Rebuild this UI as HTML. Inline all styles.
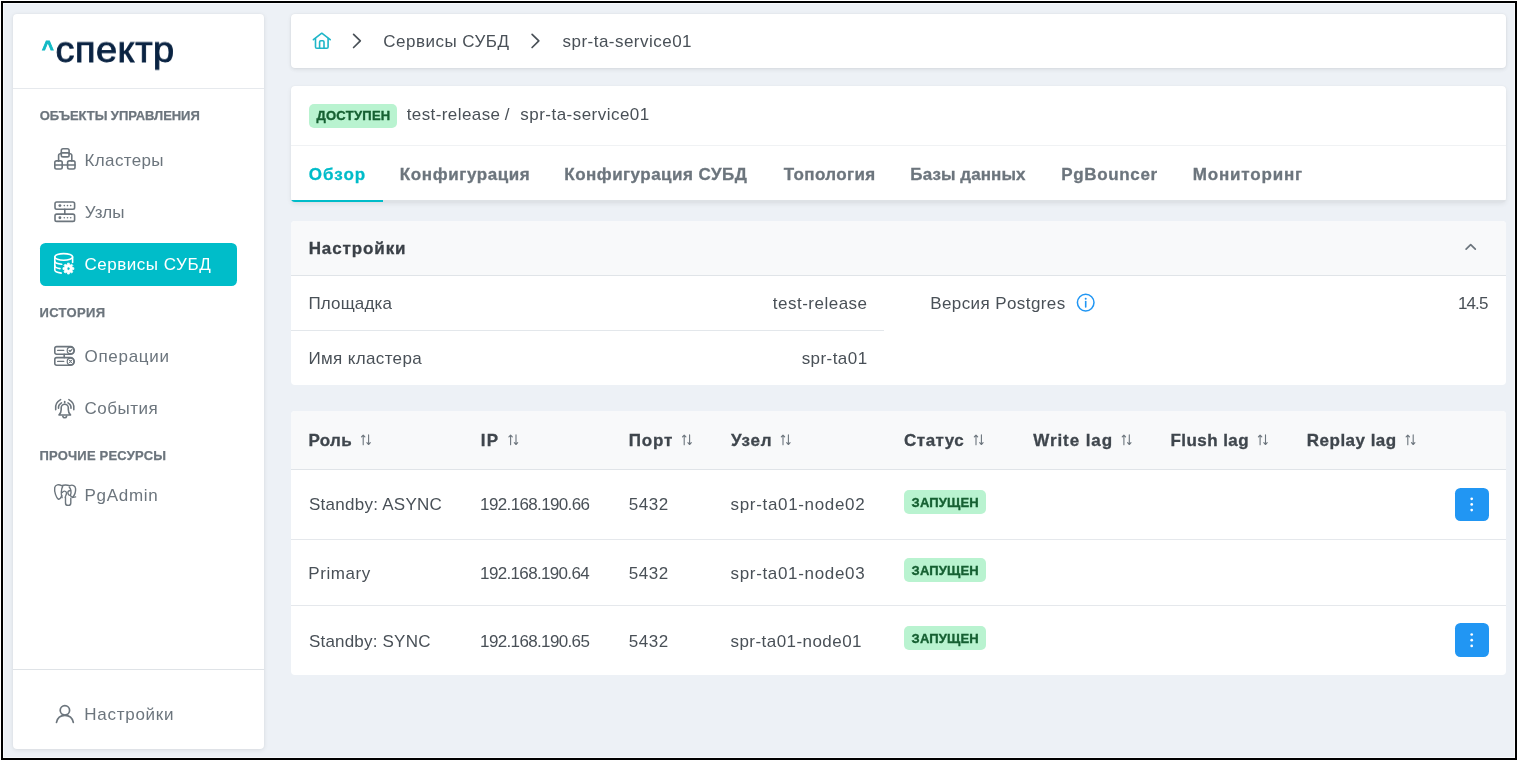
<!DOCTYPE html>
<html lang="ru"><head><meta charset="utf-8"><title>Спектр</title>
<style>
html,body{margin:0;padding:0;background:#fff;}
body{width:1518px;height:761px;position:relative;overflow:hidden;font-family:"Liberation Sans",Arial,sans-serif;}
#frame{position:absolute;left:1px;top:1px;width:1512px;height:755px;border:2px solid #000;background:#edf1f6;}
#frame:after{content:"";position:absolute;left:0;top:0;right:0;bottom:0;border:1px solid #f7f9fc;}
.t{position:absolute;white-space:nowrap;line-height:24px;height:24px;will-change:transform;}
.card{position:absolute;background:#fff;border-radius:4px;box-shadow:0 3px 5px rgba(0,0,0,.02),0 0 2px rgba(0,0,0,.05),0 1px 4px rgba(0,0,0,.08);}
.ln{position:absolute;height:1px;background:#e5e8ec;}
.ab{position:absolute;}
svg{position:absolute;overflow:visible;}
</style></head><body>
<div id="frame"></div>

<nav aria-label="Меню">
<div class="card" style="left:13px;top:14px;width:251px;height:735.2px;box-shadow:0 1px 5px rgba(0,0,0,.09),0 0 2px rgba(0,0,0,.04);"></div>
<div class="ln" style="left:13px;top:88px;width:251px;background:#e6e9ed;"></div>
<div class="ln" style="left:13px;top:668.7px;width:251px;background:#dfe3e7;"></div>
<span class="t" style="left:41px;padding-left:0.95px;top:36px;font-size:20px;font-weight:700;color:#12b9c4;letter-spacing:0.000px;-webkit-text-stroke:0.9px #12b9c4;">^</span>
<span class="t" style="left:55px;padding-left:0.38px;top:37px;font-size:38px;color:#0a2342;letter-spacing:0.511px;-webkit-text-stroke:0.9px #0a2342;transform:scaleY(0.93);transform-origin:0 25px;">спектр</span>
<span class="t" style="left:39px;padding-left:0.78px;top:104px;font-size:13px;font-weight:700;color:#6c757d;letter-spacing:-0.046px;-webkit-text-stroke:0.25px;">ОБЪЕКТЫ УПРАВЛЕНИЯ</span>
<span class="t" style="left:84px;padding-left:0.60px;top:149px;font-size:17px;color:#6c757d;letter-spacing:0.350px;">Кластеры</span>
<span class="t" style="left:84px;padding-left:0.83px;top:201px;font-size:17px;color:#6c757d;letter-spacing:0.049px;">Узлы</span>
<div class="ab" style="left:39.8px;top:242.5px;width:197.4px;height:43.2px;border-radius:5.5px;background:#00bdc9;"></div>
<span class="t" style="left:84px;padding-left:0.45px;top:253px;font-size:17px;color:#fff;letter-spacing:0.535px;">Сервисы СУБД</span>
<span class="t" style="left:39px;padding-left:0.46px;top:301px;font-size:13px;font-weight:700;color:#6c757d;letter-spacing:0.353px;-webkit-text-stroke:0.25px;">ИСТОРИЯ</span>
<span class="t" style="left:84px;padding-left:0.49px;top:345px;font-size:17px;color:#6c757d;letter-spacing:0.705px;">Операции</span>
<span class="t" style="left:84px;padding-left:0.45px;top:397px;font-size:17px;color:#6c757d;letter-spacing:0.505px;">События</span>
<span class="t" style="left:39px;padding-left:0.42px;top:444px;font-size:13px;font-weight:700;color:#6c757d;letter-spacing:0.210px;-webkit-text-stroke:0.25px;">ПРОЧИЕ РЕСУРСЫ</span>
<span class="t" style="left:84px;padding-left:0.50px;top:484px;font-size:17px;color:#6c757d;letter-spacing:0.715px;">PgAdmin</span>
<span class="t" style="left:84px;padding-left:0.30px;top:703px;font-size:17px;color:#6c757d;letter-spacing:0.726px;">Настройки</span>
</nav>
<main>
<section aria-label="breadcrumb">
<div class="card" style="left:291.3px;top:14px;width:1215px;height:53.5px;"></div>
<span class="t" style="left:383px;padding-left:0.25px;top:30px;font-size:17px;color:#495057;letter-spacing:0.490px;">Сервисы СУБД</span>
<span class="t" style="left:562px;padding-left:0.53px;top:30px;font-size:17px;color:#495057;letter-spacing:0.475px;">spr-ta-service01</span>
</section>
<section aria-label="service">
<div class="card" style="left:291.3px;top:86.2px;width:1215px;height:116.3px;background:#dee2e6;box-shadow:0 2px 5px rgba(0,0,0,.07),0 0 2px rgba(0,0,0,.04);overflow:hidden;"><div style="height:113.5px;background:#fff;"></div><div style="height:2.8px;width:91.7px;background:#00bcc9;"></div></div>
<div class="ln" style="left:291.3px;top:144.5px;width:1215px;background:#f0f2f4;"></div>
<div class="ab" style="left:309.4px;top:104px;width:87.6px;height:24px;border-radius:5px;background:#b9f3d0;"></div>
<span class="t" style="left:316px;padding-left:0.40px;top:104px;font-size:13px;font-weight:700;color:#166032;letter-spacing:0.284px;-webkit-text-stroke:0.35px;">ДОСТУПЕН</span>
<span class="t" style="left:406px;padding-left:0.64px;top:103px;font-size:17px;color:#495057;letter-spacing:0.418px;">test-release</span>
<span class="t" style="left:504px;padding-left:0.80px;top:103px;font-size:17px;color:#495057;letter-spacing:0.000px;">/</span>
<span class="t" style="left:520px;padding-left:0.33px;top:103px;font-size:17px;color:#495057;letter-spacing:0.469px;">spr-ta-service01</span>
<span class="t" style="left:308px;padding-left:0.82px;top:163px;font-size:17px;font-weight:700;color:#00bcc9;letter-spacing:1.021px;-webkit-text-stroke:0.3px;">Обзор</span>
<span class="t" style="left:399px;padding-left:0.85px;top:163px;font-size:17px;font-weight:700;color:#6c757d;letter-spacing:0.600px;-webkit-text-stroke:0.3px;">Конфигурация</span>
<span class="t" style="left:564px;padding-left:0.35px;top:163px;font-size:17px;font-weight:700;color:#6c757d;letter-spacing:0.471px;-webkit-text-stroke:0.3px;">Конфигурация СУБД</span>
<span class="t" style="left:783px;padding-left:0.83px;top:163px;font-size:17px;font-weight:700;color:#6c757d;letter-spacing:0.375px;-webkit-text-stroke:0.3px;">Топология</span>
<span class="t" style="left:910px;padding-left:0.35px;top:163px;font-size:17px;font-weight:700;color:#6c757d;letter-spacing:0.085px;-webkit-text-stroke:0.3px;">Базы данных</span>
<span class="t" style="left:1061px;padding-left:0.15px;top:163px;font-size:17px;font-weight:700;color:#6c757d;letter-spacing:0.663px;-webkit-text-stroke:0.3px;">PgBouncer</span>
<span class="t" style="left:1192px;padding-left:0.75px;top:163px;font-size:17px;font-weight:700;color:#6c757d;letter-spacing:0.829px;-webkit-text-stroke:0.3px;">Мониторинг</span>
</section>
<section aria-label="settings">
<div class="card" style="left:291.3px;top:220.8px;width:1215px;height:163.9px;overflow:hidden;box-shadow:none;"><div style="height:54px;background:#f8f9fa;border-bottom:1px solid #e0e4e8;"></div></div>
<span class="t" style="left:308px;padding-left:0.65px;top:237px;font-size:17px;font-weight:700;color:#3a4047;letter-spacing:0.902px;-webkit-text-stroke:0.3px;">Настройки</span>
<div class="ln" style="left:291.3px;top:329.6px;width:593.2px;background:#e3e7eb;"></div>
<span class="t" style="left:308px;padding-left:0.44px;top:292px;font-size:17px;color:#495057;letter-spacing:0.144px;">Площадка</span>
<span class="t" style="left:308px;padding-left:0.40px;top:347px;font-size:17px;color:#495057;letter-spacing:0.363px;">Имя кластера</span>
<span class="t" style="left:772px;padding-left:0.84px;top:292px;font-size:17px;color:#495057;letter-spacing:0.490px;">test-release</span>
<span class="t" style="left:801px;padding-left:0.63px;top:347px;font-size:17px;color:#495057;letter-spacing:0.447px;">spr-ta01</span>
<span class="t" style="left:930px;padding-left:0.20px;top:292px;font-size:17px;color:#495057;letter-spacing:0.411px;">Версия Postgres</span>
<span class="t" style="left:1457px;padding-left:0.92px;top:292px;font-size:17px;color:#495057;letter-spacing:-0.870px;">14.5</span>
</section>
<section aria-label="instances">
<div class="card" style="left:291.3px;top:411.2px;width:1215px;height:263.4px;overflow:hidden;box-shadow:none;"><div style="height:57.5px;background:#f8f9fa;border-bottom:1px solid #e0e4e8;"></div></div>
<div class="ln" style="left:291.3px;top:539px;width:1215px;"></div>
<div class="ln" style="left:291.3px;top:604.7px;width:1215px;"></div>
<span class="t" style="left:308px;padding-left:0.55px;top:429px;font-size:17px;font-weight:700;color:#3f464d;letter-spacing:0.303px;-webkit-text-stroke:0.3px;">Роль</span>
<span class="t" style="left:480px;padding-left:0.65px;top:429px;font-size:17px;font-weight:700;color:#3f464d;letter-spacing:1.277px;-webkit-text-stroke:0.3px;">IP</span>
<span class="t" style="left:628px;padding-left:0.65px;top:429px;font-size:17px;font-weight:700;color:#3f464d;letter-spacing:0.839px;-webkit-text-stroke:0.3px;">Порт</span>
<span class="t" style="left:731px;padding-left:0.10px;top:429px;font-size:17px;font-weight:700;color:#3f464d;letter-spacing:0.727px;-webkit-text-stroke:0.3px;">Узел</span>
<span class="t" style="left:904px;padding-left:0.12px;top:429px;font-size:17px;font-weight:700;color:#3f464d;letter-spacing:0.471px;-webkit-text-stroke:0.3px;">Статус</span>
<span class="t" style="left:1033px;padding-left:0.30px;top:429px;font-size:17px;font-weight:700;color:#3f464d;letter-spacing:0.915px;-webkit-text-stroke:0.3px;">Write lag</span>
<span class="t" style="left:1170px;padding-left:0.45px;top:429px;font-size:17px;font-weight:700;color:#3f464d;letter-spacing:0.446px;-webkit-text-stroke:0.3px;">Flush lag</span>
<span class="t" style="left:1306px;padding-left:0.85px;top:429px;font-size:17px;font-weight:700;color:#3f464d;letter-spacing:0.479px;-webkit-text-stroke:0.3px;">Replay lag</span>
<span class="t" style="left:308px;padding-left:0.94px;top:493px;font-size:17px;color:#495057;letter-spacing:0.265px;">Standby: ASYNC</span>
<span class="t" style="left:480px;padding-left:0.12px;top:493px;font-size:17px;color:#495057;letter-spacing:-0.642px;">192.168.190.66</span>
<span class="t" style="left:628px;padding-left:0.72px;top:493px;font-size:17px;color:#495057;letter-spacing:0.568px;">5432</span>
<span class="t" style="left:730px;padding-left:0.53px;top:493px;font-size:17px;color:#495057;letter-spacing:0.674px;">spr-ta01-node02</span>
<div class="ab" style="left:904.1px;top:490.2px;width:81.8px;height:23.8px;border-radius:5px;background:#b9f3d0;"></div>
<span class="t" style="left:911px;padding-left:0.61px;top:491px;font-size:13px;font-weight:700;color:#166032;letter-spacing:0.161px;-webkit-text-stroke:0.35px;">ЗАПУЩЕН</span>
<div class="ab" style="left:1454.9px;top:487.6px;width:33.7px;height:33.6px;border-radius:5.5px;background:#2196f3;"></div>
<span class="t" style="left:308px;padding-left:0.30px;top:562px;font-size:17px;color:#495057;letter-spacing:0.547px;">Primary</span>
<span class="t" style="left:480px;padding-left:0.12px;top:562px;font-size:17px;color:#495057;letter-spacing:-0.662px;">192.168.190.64</span>
<span class="t" style="left:628px;padding-left:0.72px;top:562px;font-size:17px;color:#495057;letter-spacing:0.568px;">5432</span>
<span class="t" style="left:730px;padding-left:0.53px;top:562px;font-size:17px;color:#495057;letter-spacing:0.668px;">spr-ta01-node03</span>
<div class="ab" style="left:904.1px;top:558.4px;width:81.8px;height:23.8px;border-radius:5px;background:#b9f3d0;"></div>
<span class="t" style="left:911px;padding-left:0.61px;top:559px;font-size:13px;font-weight:700;color:#166032;letter-spacing:0.161px;-webkit-text-stroke:0.35px;">ЗАПУЩЕН</span>
<span class="t" style="left:308px;padding-left:0.94px;top:630px;font-size:17px;color:#495057;letter-spacing:0.201px;">Standby: SYNC</span>
<span class="t" style="left:480px;padding-left:0.12px;top:630px;font-size:17px;color:#495057;letter-spacing:-0.646px;">192.168.190.65</span>
<span class="t" style="left:628px;padding-left:0.72px;top:630px;font-size:17px;color:#495057;letter-spacing:0.568px;">5432</span>
<span class="t" style="left:730px;padding-left:0.53px;top:630px;font-size:17px;color:#495057;letter-spacing:0.446px;">spr-ta01-node01</span>
<div class="ab" style="left:904.1px;top:626.3px;width:81.8px;height:23.8px;border-radius:5px;background:#b9f3d0;"></div>
<span class="t" style="left:911px;padding-left:0.61px;top:627px;font-size:13px;font-weight:700;color:#166032;letter-spacing:0.161px;-webkit-text-stroke:0.35px;">ЗАПУЩЕН</span>
<div class="ab" style="left:1454.9px;top:623.4px;width:33.7px;height:33.6px;border-radius:5.5px;background:#2196f3;"></div>
</section>
</main>
<svg width="1518" height="761" viewBox="0 0 1518 761" style="left:0;top:0;" fill="none" stroke-linecap="round" stroke-linejoin="round">
<g stroke="#6c757d" stroke-width="1.6"><rect x="61.3" y="148.8" width="7.8" height="8.1" rx="1.7"/><path d="M61.3 152.9h7.800"/><rect x="54.8" y="160.9" width="7.4" height="8.1" rx="1.7"/><path d="M54.8 165h7.400"/><rect x="67.6" y="160.9" width="7.4" height="8.1" rx="1.7"/><path d="M67.6 165h7.400"/><path d="M61.4 153.8h-1.2a1.6 1.6 0 0 0-1.6 1.6v5.7M69 153.8h1.2a1.6 1.6 0 0 1 1.6 1.6v5.7M62.2 165h5.4"/></g>
<g stroke="#6c757d" stroke-width="1.6"><rect x="55" y="202" width="19.6" height="7.3" rx="1.7"/><rect x="55" y="214.1" width="19.6" height="7.3" rx="1.7"/><path d="M64.8 209.3v4.800"/></g>
<g fill="#6c757d"><circle cx="59.9" cy="205.6" r="1.45"/><circle cx="64.3" cy="205.6" r=".8"/><circle cx="67.5" cy="205.6" r=".8"/><circle cx="70.7" cy="205.6" r=".8"/><circle cx="59.9" cy="217.7" r="1.45"/><circle cx="64.3" cy="217.7" r=".8"/><circle cx="67.5" cy="217.7" r=".8"/><circle cx="70.7" cy="217.7" r=".8"/></g>
<g stroke="#fff" stroke-width="1.6"><ellipse cx="63.7" cy="256.9" rx="8.9" ry="3.3"/><path d="M54.8 256.9v13.2c0 1.3 2.6 2.5 6.4 3"/><path d="M72.6 256.9v5.6"/><path d="M54.8 261.3c0 1.3 2.6 2.5 6.9 3"/><path d="M54.8 265.7c0 1.3 2.3 2.4 5.2 2.9"/></g>
<path d="M72.58 267.60 L73.83 267.74 L73.83 269.46 L72.58 269.60 L72.07 270.85 L72.85 271.83 L71.63 273.05 L70.65 272.27 L69.40 272.78 L69.26 274.03 L67.54 274.03 L67.40 272.78 L66.15 272.27 L65.17 273.05 L63.95 271.83 L64.73 270.85 L64.22 269.60 L62.97 269.46 L62.97 267.74 L64.22 267.60 L64.73 266.35 L63.95 265.37 L65.17 264.15 L66.15 264.93 L67.40 264.42 L67.54 263.17 L69.26 263.17 L69.40 264.42 L70.65 264.93 L71.63 264.15 L72.85 265.37 L72.07 266.35Z M66.70 268.60 a1.7 1.7 0 1 0 3.4 0 a1.7 1.7 0 1 0 -3.4 0Z" fill="#fff" fill-rule="evenodd" stroke="#fff" stroke-width="0.8" stroke-linejoin="round"/>
<g stroke="#6c757d" stroke-width="1.6"><path d="M56.6 346.6h13.9a3.8 3.8 0 0 1 0 7.6h-13.9a1.8 1.8 0 0 1-1.8-1.8v-4a1.8 1.8 0 0 1 1.8-1.8z"/><path d="M56.6 357.6h13.9a3.8 3.8 0 0 1 0 7.6h-13.9a1.8 1.8 0 0 1-1.8-1.8v-4a1.8 1.8 0 0 1 1.8-1.8z"/><path d="M64.2 354.2v3.4"/></g>
<g stroke="#6c757d" stroke-width="1.2"><circle cx="70.5" cy="350.4" r="3.3"/><circle cx="70.5" cy="361.4" r="3.3"/><path d="M57.6 350.4h6.2M57.6 361.4h6.2"/><path d="M69.1 350.5l1 1 1.9-2.1"/><path d="M69.5 360.4l2 2M71.5 360.4l-2 2"/></g>
<g stroke="#6c757d" stroke-width="1.6"><path d="M64.7 401.6v1.2"/><path d="M59 415c1.6-1.2 2.2-2.6 2.2-5.4v-1.8a3.55 3.55 0 0 1 7.1 0v1.8c0 2.8.6 4.2 2.2 5.4z"/><path d="M62.8 416.2c.3 1.1 1 1.6 1.9 1.6s1.6-.5 1.9-1.6"/><path d="M60.6 399.6c-3.7 1.9-5.6 5.6-4.9 10"/><path d="M61.5 402.9c-2.2 1.2-3.2 3.2-3 5.4"/><path d="M68.9 399.6c3.7 1.9 5.6 5.6 4.9 10"/><path d="M68 402.9c2.2 1.2 3.2 3.2 3 5.4"/></g>
<g stroke="#6c757d" stroke-width="1.4"><path d="M61.6 485.6c-2.6-1.3-6.4-1.2-6.9 2.1-.6 4.200 1.500 9.800 3.600 11.600 1.500 0 3-2.400 3.500-3.600"/><path d="M61.600 485.600c2.500-.9 5.200-.9 8.200 0"/><path d="M69.800 485.600c2.800-1.300 5.600 0 5.800 3.200.2 3.200-1 6.400-3 8.600"/><path d="M62.700 486.500c-1.800 2.600-1.700 8.200-.600 11.200"/><path d="M65.500 497.500v5.400c0 3.300 5.300 3.300 5.300 0v-4.600"/><path d="M62.400 492.300c1-1.600 3.700-1.700 4.100.6.300 1.800-1.300 2.800-1.200 4.600"/><path d="M69.200 487c1.600 1.700 2.600 5.400 1.200 8.400-1.500.2-2.600-1.400-2.500-3.200.1-1 .8-1.500 1.700-1.400"/><path d="M70.400 495.400c.6 1.700 2.700 2.300 5.200 1.500"/></g>
<g stroke="#6c757d" stroke-width="1.7"><circle cx="64.9" cy="710.3" r="4.7"/><path d="M56.5 722.400c.9-4.600 4.100-7.100 8.400-7.100s7.500 2.500 8.400 7.100"/></g>
<g stroke="#1fb6c8" stroke-width="1.6"><path d="M313.400 39.700l8.400-6.500 8.400 6.500"/><path d="M315.500 38.500v8.500a1.300 1.300 0 0 0 1.300 1.300h10a1.300 1.300 0 0 0 1.300-1.300v-8.500"/><path d="M319.600 48.200v-6.200a1.200 1.200 0 0 1 1.200-1.200h2a1.200 1.200 0 0 1 1.200 1.200v6.200"/></g>
<g stroke="#495057" stroke-width="1.7"><path d="M353.600 34.300l6.700 6.600-6.700 6.600"/><path d="M532.100 34.300l6.700 6.600-6.700 6.600"/></g>
<path d="M1466.1 249.2l4.600-4.600 4.600 4.600" stroke="#6c757d" stroke-width="1.7"/>
<g stroke="#2196f3"><circle cx="1085.700" cy="302.600" r="8.300" stroke-width="1.500"/><path d="M1085.700 301.600v5.300" stroke-width="1.600"/></g><circle cx="1085.700" cy="298.800" r="1" fill="#2196f3"/>
<g stroke="#6c757d" stroke-width="1.1"><path d="M363.2 444.7V435.2M361.5 436.9L363.2 435.09999999999997L364.9 436.9"/><path d="M368.6 434.9V444.4M366.9 442.7L368.6 444.5L370.3 442.7"/></g>
<g stroke="#6c757d" stroke-width="1.1"><path d="M510.6 444.7V435.2M508.9 436.9L510.6 435.09999999999997L512.3 436.9"/><path d="M516.0 434.9V444.4M514.3 442.7L516.0 444.5L517.7 442.7"/></g>
<g stroke="#6c757d" stroke-width="1.1"><path d="M684.2 444.7V435.2M682.5 436.9L684.2 435.09999999999997L685.9 436.9"/><path d="M689.6 434.9V444.4M687.9 442.7L689.6 444.5L691.3 442.7"/></g>
<g stroke="#6c757d" stroke-width="1.1"><path d="M783.0 444.7V435.2M781.3 436.9L783.0 435.09999999999997L784.7 436.9"/><path d="M788.4 434.9V444.4M786.7 442.7L788.4 444.5L790.1 442.7"/></g>
<g stroke="#6c757d" stroke-width="1.1"><path d="M976.0 444.7V435.2M974.3 436.9L976.0 435.09999999999997L977.7 436.9"/><path d="M981.4 434.9V444.4M979.7 442.7L981.4 444.5L983.1 442.7"/></g>
<g stroke="#6c757d" stroke-width="1.1"><path d="M1123.9 444.7V435.2M1122.2 436.9L1123.9 435.09999999999997L1125.6 436.9"/><path d="M1129.3 434.9V444.4M1127.6 442.7L1129.3 444.5L1131.0 442.7"/></g>
<g stroke="#6c757d" stroke-width="1.1"><path d="M1260.1 444.7V435.2M1258.4 436.9L1260.1 435.09999999999997L1261.8 436.9"/><path d="M1265.5 434.9V444.4M1263.8 442.7L1265.5 444.5L1267.2 442.7"/></g>
<g stroke="#6c757d" stroke-width="1.1"><path d="M1407.8 444.7V435.2M1406.1 436.9L1407.8 435.09999999999997L1409.5 436.9"/><path d="M1413.2 434.9V444.4M1411.5 442.7L1413.2 444.5L1414.9 442.7"/></g>
<g fill="#fff"><circle cx="1471.700" cy="498.8" r="1.35"/><circle cx="1471.700" cy="504.4" r="1.35"/><circle cx="1471.700" cy="510.1" r="1.35"/></g>
<g fill="#fff"><circle cx="1471.700" cy="634.5" r="1.35"/><circle cx="1471.700" cy="640.2" r="1.35"/><circle cx="1471.700" cy="645.9" r="1.35"/></g>
</svg>
</body></html>
